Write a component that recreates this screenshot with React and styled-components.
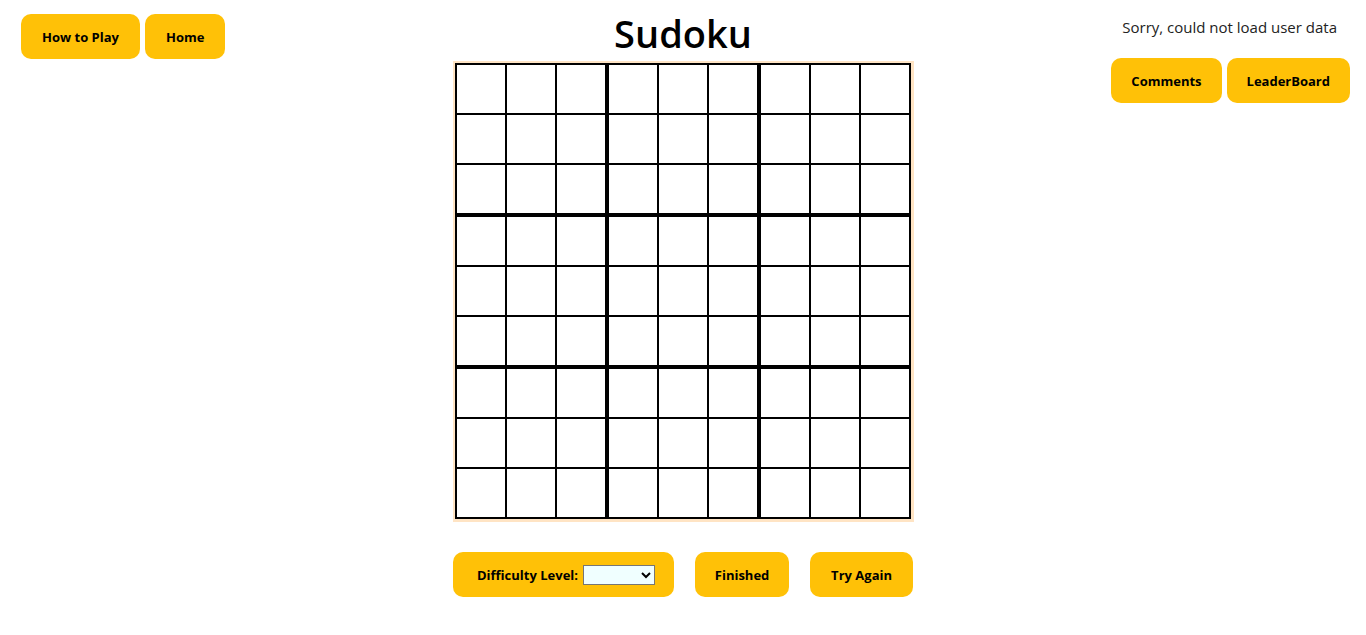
import React from "react";
import styled, { createGlobalStyle } from "styled-components";

const Global = createGlobalStyle`
  html, body { margin: 0; padding: 0; background: #ffffff; }
  body { font-family: "Open Sans", "Noto Sans", "Liberation Sans", sans-serif; color: #000; }
`;

const Page = styled.div`
  display: grid;
  grid-template-columns: 1fr auto 1fr;
  width: 1366px;
  min-height: 635px;
`;

const LeftBar = styled.div`
  display: flex;
  align-items: flex-start;
  gap: 5px;
  padding: 14px 0 0 21px;
`;

const RightBar = styled.div`
  display: flex;
  flex-direction: column;
  align-items: flex-end;
  padding: 15px 16px 0 0;
`;

const Notice = styled.p`
  margin: 0 13px 19px 0;
  font-size: 15px;
  line-height: 24px;
  color: #222;
`;

const ButtonRow = styled.div`
  display: flex;
  gap: 5px;
`;

const Button = styled.button`
  background: #ffc107;
  border: none;
  border-radius: 10px;
  height: 45px;
  padding: 0 ${(p) => p.$pr || p.$px || 20}px 0 ${(p) => p.$px || 20}px;
  font-family: inherit;
  font-size: 13px;
  font-weight: 700;
  color: #000;
  display: inline-flex;
  align-items: center;
  gap: 5px;
  cursor: pointer;
`;

const Center = styled.main`
  display: flex;
  flex-direction: column;
  align-items: center;
`;

const Title = styled.h1`
  margin: 10px 0 4px;
  font-size: 38px;
  line-height: 47px;
  font-weight: 600;
`;

const Frame = styled.div`
  background: #ffe4c4;
  padding: 2px 3px 3px 2px;
`;

const Board = styled.div`
  display: grid;
  grid-template-columns: repeat(3, 148px);
  gap: 4px;
  padding: 2px;
  background: #000;
`;

const Box = styled.div`
  display: grid;
  grid-template-columns: repeat(3, 48px);
  grid-auto-rows: 48px;
  gap: 2px;
`;

const Cell = styled.div`
  background: #fff;
`;

const Controls = styled.div`
  display: flex;
  justify-content: space-between;
  width: 460px;
  margin-top: 30px;
`;

const Select = styled.select`
  width: 72px;
  height: 20px;
  background: #f0ffff;
  border: 1px solid #767676;
  border-radius: 0;
  font-size: 12px;
`;

export default function App() {
  const nine = Array.from({ length: 9 });
  return (
    <>
      <Global />
      <Page>
        <LeftBar>
          <Button $px={21}>How to Play</Button>
          <Button $px={21}>Home</Button>
        </LeftBar>
        <Center>
          <Title>Sudoku</Title>
          <Frame>
            <Board>
              {nine.map((_, b) => (
                <Box key={b}>
                  {nine.map((_, c) => (
                    <Cell key={c} />
                  ))}
                </Box>
              ))}
            </Board>
          </Frame>
          <Controls>
            <Button $px={24} $pr={19}>
              Difficulty Level:
              <Select defaultValue="">
                <option value=""></option>
                <option value="easy">Easy</option>
                <option value="medium">Medium</option>
                <option value="hard">Hard</option>
              </Select>
            </Button>
            <Button>Finished</Button>
            <Button $px={21}>Try Again</Button>
          </Controls>
        </Center>
        <RightBar>
          <Notice>Sorry, could not load user data</Notice>
          <ButtonRow>
            <Button>Comments</Button>
            <Button>LeaderBoard</Button>
          </ButtonRow>
        </RightBar>
      </Page>
    </>
  );
}
